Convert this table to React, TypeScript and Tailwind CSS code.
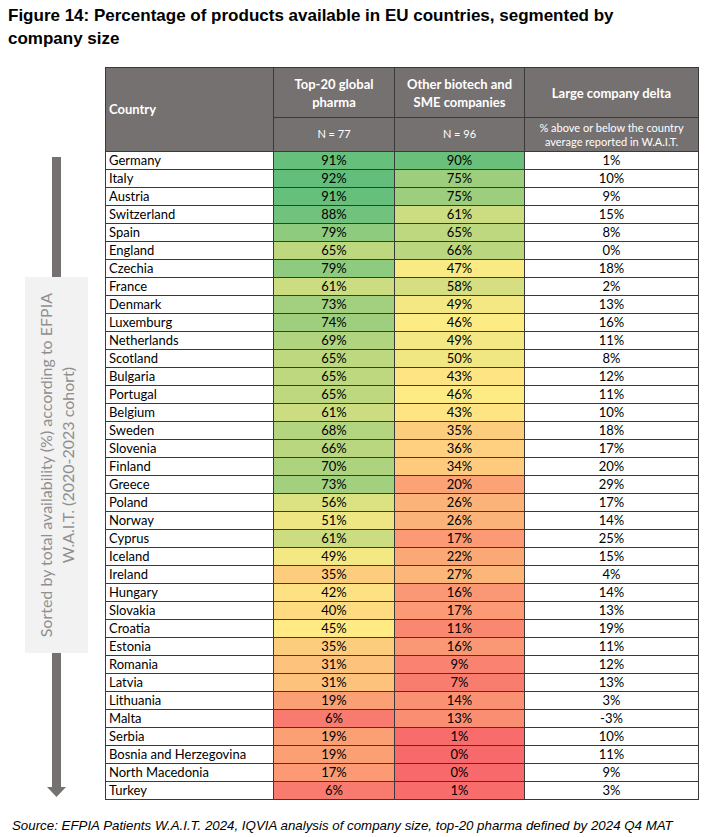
import React from "react";

type Row = [string, number, number, string];

const rows: Row[] = [
  ["Germany", 91, 90, "1%"],
  ["Italy", 92, 75, "10%"],
  ["Austria", 91, 75, "9%"],
  ["Switzerland", 88, 61, "15%"],
  ["Spain", 79, 65, "8%"],
  ["England", 65, 66, "0%"],
  ["Czechia", 79, 47, "18%"],
  ["France", 61, 58, "2%"],
  ["Denmark", 73, 49, "13%"],
  ["Luxemburg", 74, 46, "16%"],
  ["Netherlands", 69, 49, "11%"],
  ["Scotland", 65, 50, "8%"],
  ["Bulgaria", 65, 43, "12%"],
  ["Portugal", 65, 46, "11%"],
  ["Belgium", 61, 43, "10%"],
  ["Sweden", 68, 35, "18%"],
  ["Slovenia", 66, 36, "17%"],
  ["Finland", 70, 34, "20%"],
  ["Greece", 73, 20, "29%"],
  ["Poland", 56, 26, "17%"],
  ["Norway", 51, 26, "14%"],
  ["Cyprus", 61, 17, "25%"],
  ["Iceland", 49, 22, "15%"],
  ["Ireland", 35, 27, "4%"],
  ["Hungary", 42, 16, "14%"],
  ["Slovakia", 40, 17, "13%"],
  ["Croatia", 45, 11, "19%"],
  ["Estonia", 35, 16, "11%"],
  ["Romania", 31, 9, "12%"],
  ["Latvia", 31, 7, "13%"],
  ["Lithuania", 19, 14, "3%"],
  ["Malta", 6, 13, "-3%"],
  ["Serbia", 19, 1, "10%"],
  ["Bosnia and Herzegovina", 19, 0, "11%"],
  ["North Macedonia", 17, 0, "9%"],
  ["Turkey", 6, 1, "3%"],
];

const RED = [248, 105, 107];
const YEL = [255, 235, 132];
const GRN = [99, 190, 123];
const MIN = 0;
const MID = 45.5;
const MAX = 92;

function mix(a: number[], b: number[], t: number) {
  return a.map((x, i) => Math.round(x + (b[i] - x) * t));
}

function scale(v: number) {
  let c: number[];
  if (v <= MID) c = mix(RED, YEL, (v - MIN) / (MID - MIN));
  else c = mix(YEL, GRN, Math.min(1, (v - MID) / (MAX - MID)));
  return `rgb(${c[0]},${c[1]},${c[2]})`;
}

const cell = "border-r border-b border-[#3a3a3a] h-[18px] flex items-center";

export default function App() {
  return (
    <div className="w-[721px] h-[837px] bg-white overflow-hidden font-['Liberation_Sans',Arial,sans-serif]">
      <div className="pt-[4px] pl-[8px] text-[17px] leading-[23px] font-bold text-black">
        Figure 14: Percentage of products available in EU countries, segmented by
        <br />
        company size
      </div>

      <div className="flex mt-[17px]">
        <div className="w-[63px] ml-[25px] mr-[17px] flex flex-col items-center">
          <div className="w-[9px] h-[120px] mt-[90px] bg-[#767171]" />
          <div className="w-[63px] h-[376px] bg-[#f2f2f2] flex items-center justify-center">
            <div className="[writing-mode:vertical-rl] rotate-180 whitespace-nowrap text-center text-[16px] leading-[22px] text-[#8f8f8f] font-['Lato',sans-serif]">
              Sorted by total availability (%) according to EFPIA
              <br />
              W.A.I.T. (2020-2023 cohort)
            </div>
          </div>
          <div className="w-[9px] h-[134px] bg-[#767171]" />
          <svg width="19" height="10" viewBox="0 0 19 10" className="block">
            <polygon points="0,0 19,0 9.5,10" fill="#767171" />
          </svg>
        </div>

        <div className="grid grid-cols-[168px_121px_130px_174px] border-l border-t border-[#3a3a3a] font-['Lato',sans-serif] self-start">
          <div className="row-span-2 border-r border-b border-[#3a3a3a] bg-[#767171] text-white font-bold text-[13px] flex items-center pl-[3px]">
            Country
          </div>
          <div className="border-r border-b border-[#3a3a3a] bg-[#767171] text-white font-bold text-[13px] leading-[18px] h-[50px] flex items-center justify-center text-center">
            Top-20 global
            <br />
            pharma
          </div>
          <div className="border-r border-b border-[#3a3a3a] bg-[#767171] text-white font-bold text-[13px] leading-[18px] h-[50px] flex items-center justify-center text-center">
            Other biotech and
            <br />
            SME companies
          </div>
          <div className="border-r border-b border-[#3a3a3a] bg-[#767171] text-white font-bold text-[13px] leading-[18px] h-[50px] flex items-center justify-center text-center">
            Large company delta
          </div>
          <div className="border-r border-b border-[#3a3a3a] bg-[#767171] text-white text-[11px] h-[34px] flex items-center justify-center">
            N = 77
          </div>
          <div className="border-r border-b border-[#3a3a3a] bg-[#767171] text-white text-[11px] h-[34px] flex items-center justify-center">
            N = 96
          </div>
          <div className="border-r border-b border-[#3a3a3a] bg-[#767171] text-white text-[11px] leading-[14px] h-[34px] flex items-center justify-center text-center">
            % above or below the country
            <br />
            average reported in W.A.I.T.
          </div>

          {rows.map(([name, a, b, d]) => (
            <React.Fragment key={name}>
              <div className={`${cell} bg-white pl-[3px] text-[13px] text-black`}>{name}</div>
              <div
                className={`${cell} justify-center text-[13px] text-black`}
                style={{ backgroundColor: scale(a) }}
              >
                {a}%
              </div>
              <div
                className={`${cell} justify-center text-[13px] text-black`}
                style={{ backgroundColor: scale(b) }}
              >
                {b}%
              </div>
              <div className={`${cell} bg-white justify-center text-[13px] text-black`}>{d}</div>
            </React.Fragment>
          ))}
        </div>
      </div>

      <div className="mt-[18px] pl-[12px] text-[13.3px] leading-[16px] italic text-black">
        Source: EFPIA Patients W.A.I.T. 2024, IQVIA analysis of company size, top-20 pharma defined by 2024 Q4 MAT
      </div>
    </div>
  );
}
